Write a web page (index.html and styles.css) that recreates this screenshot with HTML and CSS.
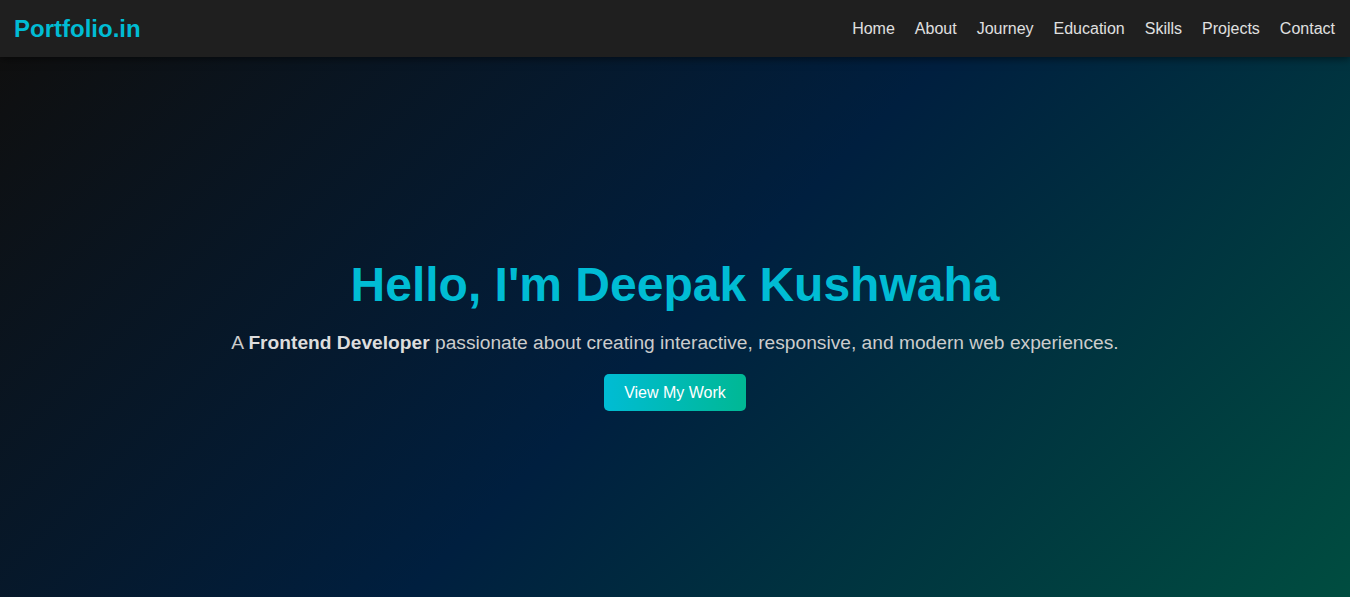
FILE: index.html
```html
<!DOCTYPE html>
<html lang="en">
<head>
<meta charset="utf-8">
<title>Portfolio</title>
<link rel="stylesheet" href="styles.css">
</head>
<body>
<header class="site-header">
  <div class="logo">Portfolio.in</div>
  <nav class="nav">
    <a href="#">Home</a>
    <a href="#">About</a>
    <a href="#">Journey</a>
    <a href="#">Education</a>
    <a href="#">Skills</a>
    <a href="#">Projects</a>
    <a href="#">Contact</a>
  </nav>
</header>
<section class="hero">
  <h1 class="hero-title">Hello, I'm Deepak Kushwaha</h1>
  <p class="hero-sub">A <strong>Frontend Developer</strong> passionate about creating interactive, responsive, and modern web experiences.</p>
  <a class="btn" href="#">View My Work</a>
</section>
</body>
</html>
```
FILE: styles.css
```css
* { box-sizing: border-box; }
html, body { margin: 0; padding: 0; }
body {
  font-family: "Liberation Sans", Arial, sans-serif;
  background: #0f0f0f;
  color: #e0e0e0;
  height: 597px;
  overflow: hidden;
}
.site-header {
  position: relative;
  z-index: 2;
  height: 57px;
  display: flex;
  align-items: center;
  justify-content: space-between;
  padding: 0 15px 0 14px;
  background: #1f1f1f;
  box-shadow: 0 2px 8px rgba(0, 0, 0, 0.5);
}
.logo {
  font-size: 24px;
  font-weight: bold;
  color: #00bcd4;
}
.nav {
  display: flex;
  gap: 20px;
}
.nav a {
  color: #e0e0e0;
  text-decoration: none;
  font-size: 16px;
}
.hero {
  height: 540px;
  display: flex;
  flex-direction: column;
  align-items: center;
  padding-top: 200px;
  text-align: center;
  background: linear-gradient(135deg, #0f0f0f 0%, #001f3f 50%, #004d40 100%);
}
.hero-title {
  margin: 0;
  font-size: 48px;
  font-weight: bold;
  color: #00bcd4;
  line-height: 1.15;
}
.hero-sub {
  margin: 20px 0 20px;
  font-size: 19.2px;
  color: #cccccc;
}
.hero-sub strong { color: #dddddd; }
.btn {
  display: inline-block;
  padding: 9.5px 20px;
  font-size: 16px;
  line-height: 18px;
  color: #ffffff;
  text-decoration: none;
  border-radius: 5px;
  background: linear-gradient(90deg, #00bcd4, #00b894);
}
```
